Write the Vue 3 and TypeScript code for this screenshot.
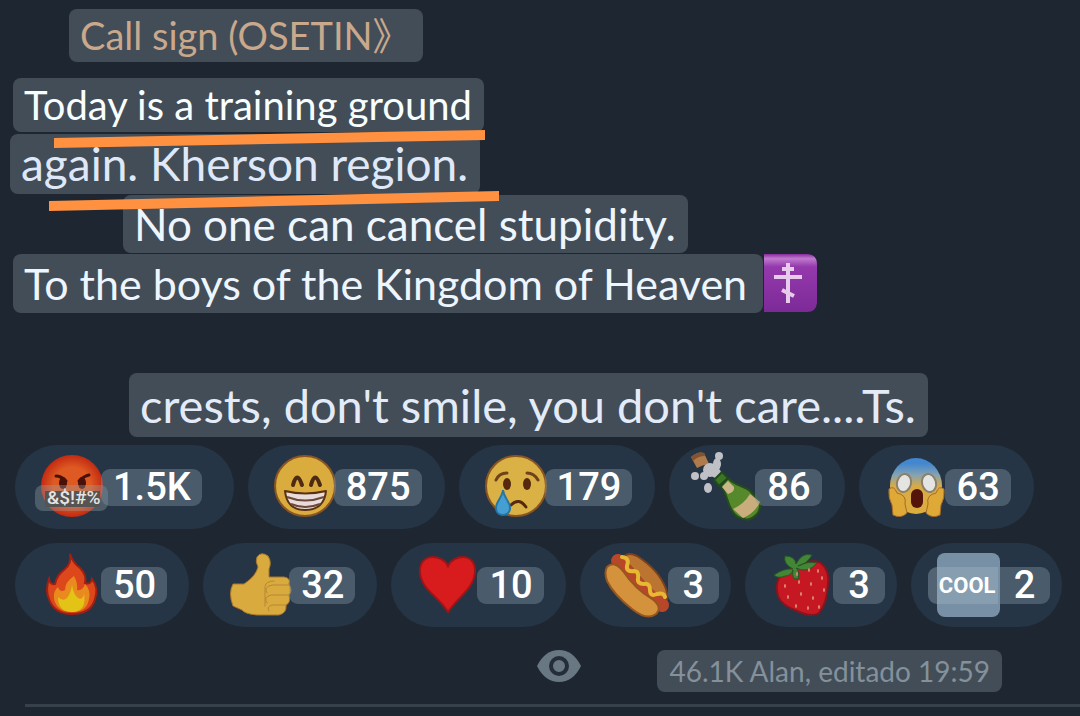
<script setup lang="ts">
type Icon =
  | 'rage' | 'grin' | 'cry' | 'bottle' | 'scream'
  | 'fire' | 'thumb' | 'heart' | 'hotdog' | 'berry' | 'cool'

interface Reaction {
  icon: Icon
  count: string
  name: string
  tag?: string
}

const rows: Reaction[][] = [
  [
    { icon: 'rage', count: '1.5K', name: 'Rage', tag: '&$!#%' },
    { icon: 'grin', count: '875', name: 'Grin' },
    { icon: 'cry', count: '179', name: 'Crying' },
    { icon: 'bottle', count: '86', name: 'Champagne' },
    { icon: 'scream', count: '63', name: 'Scream' },
  ],
  [
    { icon: 'fire', count: '50', name: 'Fire' },
    { icon: 'thumb', count: '32', name: 'Thumbs up' },
    { icon: 'heart', count: '10', name: 'Heart' },
    { icon: 'hotdog', count: '3', name: 'Hot dog' },
    { icon: 'berry', count: '3', name: 'Strawberry' },
    { icon: 'cool', count: '2', name: 'Cool', tag: 'COOL' },
  ],
]

const seeds = [
  [26, 20], [38, 16], [14, 32], [28, 28], [40, 30], [51, 24], [30, 40],
  [42, 44], [53, 36], [17, 43], [25, 52], [37, 54], [48, 53], [47, 17],
]
</script>

<template>
  <main class="post">
    <p class="line title">Call sign (OSETIN》</p>
    <p class="line today">Today is a training ground</p>
    <p class="line again">again. Kherson region.</p>
    <p class="line noone">No one can cancel stupidity.</p>
    <div class="with-cross">
      <p class="line boys">To the boys of the Kingdom of Heaven</p>
      <svg class="cross" viewBox="0 0 53 58" aria-hidden="true">
        <defs>
          <linearGradient id="purple" x1="0" y1="0" x2="0" y2="1">
            <stop offset="0" stop-color="#8a2ba0" />
            <stop offset="0.08" stop-color="#c07ace" />
            <stop offset="0.22" stop-color="#9439ac" />
            <stop offset="1" stop-color="#7d2a98" />
          </linearGradient>
        </defs>
        <path d="M0 0H44Q53 1 53 10V49Q52 58 43 58H0Z" fill="url(#purple)" />
        <path d="M24 9V49M18 15H30M10 23H38M18 36L30 42" fill="none" stroke="#e6cbea" stroke-width="4" />
      </svg>
    </div>
    <p class="line crests">crests, don't smile, you don't care....Ts.</p>

    <section class="reactions">
      <div v-for="(row, i) in rows" :key="i" class="row">
        <button
          v-for="r in row"
          :key="r.icon"
          type="button"
          class="pill"
          :class="[r.icon, { solo: r.count.length === 1, wide: i === 0 }]"
          :aria-label="`${r.name} ${r.count}`"
        >
          <span class="emoji">
            <svg viewBox="0 0 62 62" aria-hidden="true">
              <g v-if="r.icon === 'rage'">
                <defs>
                  <radialGradient id="anger">
                    <stop offset="0.6" stop-color="#de5a22" />
                    <stop offset="1" stop-color="#c32a12" />
                  </radialGradient>
                </defs>
                <circle cx="31" cy="30" r="31" fill="url(#anger)" />
                <path d="M15 20Q20 20 25 25M48 19Q43 20 38 25" fill="none" stroke="#4a1109" stroke-width="3" stroke-linecap="round" />
                <ellipse cx="22" cy="27" rx="4" ry="6" fill="#4a1109" />
                <ellipse cx="41" cy="27" rx="4" ry="6" fill="#4a1109" />
                <rect x="4" y="35" width="55" height="16" fill="#332824" />
              </g>
              <g v-else-if="r.icon === 'grin'">
                <circle cx="31" cy="30" r="30" fill="#d9ac3d" stroke="#8a5522" stroke-width="2" />
                <path d="M19 29Q23 14 28 29M37 29Q41 14 46 29" fill="none" stroke="#4f2a12" stroke-width="4" stroke-linecap="round" />
                <path d="M11 35Q31 40 52 35Q50 54 31 54Q13 54 11 35Z" fill="#e8dddb" stroke="#5b3113" stroke-width="2" stroke-linejoin="round" />
                <path d="M13 41Q31 48 50 41M17 48Q31 54 46 48" fill="none" stroke="#6b4a3b" stroke-width="2" />
              </g>
              <g v-else-if="r.icon === 'cry'">
                <circle cx="31" cy="30" r="30" fill="#d9b145" stroke="#8a5522" stroke-width="2" />
                <path d="M11 24Q14 17 22 17M42 17Q49 17 53 24" fill="none" stroke="#70421a" stroke-width="3" stroke-linecap="round" />
                <ellipse cx="22" cy="28" rx="4" ry="6" fill="#56290f" />
                <ellipse cx="42" cy="28" rx="4" ry="6" fill="#56290f" />
                <path d="M26 49Q34 41 41 51" fill="none" stroke="#56290f" stroke-width="3" stroke-linecap="round" />
                <path d="M18 34C19 43 26 46 25 53C24 61 12 61 11 53C10 47 17 42 18 34Z" fill="#469fd3" stroke="#2676a5" stroke-width="2" />
              </g>
              <g v-else-if="r.icon === 'bottle'">
                <path d="M-4 1Q3 -5 9 -3L14 8Q7 9 2 12Z" fill="#b07b4b" />
                <path d="M-4 1Q3 -5 9 -3L10 0Q3 0 -2 5Z" fill="#7f5334" />
                <g fill="#bfc1c7">
                  <circle cx="24" cy="0" r="4" />
                  <circle cx="0" cy="20" r="4" />
                  <ellipse cx="13" cy="32" rx="4" ry="5" />
                  <ellipse cx="22" cy="8" rx="4" ry="6" />
                  <circle cx="15" cy="14" r="7" />
                  <circle cx="9" cy="20" r="4" />
                  <circle cx="21" cy="17" r="5" />
                </g>
                <path d="M26 30L33 22C40 30 49 30 55 35L65 46Q66 53 62 58Q56 65 49 63Q42 62 38 56C31 46 33 39 26 30Z" fill="#55892c" stroke="#254d1a" stroke-width="2" />
                <path d="M19 24L27 16L33 22L24 30Z" fill="#3d7526" stroke="#1f4a1b" stroke-width="2" />
                <path d="M27 31L33 25L39 31Q40 36 33 38Z" fill="#cdb78a" />
                <path d="M38 53Q49 48 55 38L65 46Q60 57 48 62Z" fill="#c9ad7c" />
              </g>
              <g v-else-if="r.icon === 'scream'">
                <defs>
                  <linearGradient id="fear" x1="0" y1="0" x2="0" y2="1">
                    <stop offset="0.1" stop-color="#4287cf" />
                    <stop offset="0.3" stop-color="#84a2b2" />
                    <stop offset="0.5" stop-color="#d8aa48" />
                    <stop offset="1" stop-color="#dcae3c" />
                  </linearGradient>
                </defs>
                <ellipse cx="31" cy="30" rx="26" ry="28" fill="url(#fear)" />
                <path d="M4 33Q9 29 12 37Q22 39 20 48L22 57Q16 63 8 59L7 49Q3 42 4 33Z" fill="#dfa938" stroke="#a86a28" stroke-width="1" />
                <path d="M59 33Q54 29 51 37Q41 39 43 48L41 57Q47 63 55 59L56 49Q60 42 59 33Z" fill="#dfa938" stroke="#a86a28" stroke-width="1" />
                <ellipse cx="19" cy="27" rx="7" ry="9" transform="rotate(15 19 27)" fill="#e4e4e2" stroke="#8b806a" stroke-width="2" />
                <ellipse cx="44" cy="27" rx="7" ry="9" transform="rotate(-15 44 27)" fill="#e4e4e2" stroke="#8b806a" stroke-width="2" />
                <rect x="26" y="33" width="12" height="19" rx="6" fill="#551409" />
              </g>
              <g v-else-if="r.icon === 'fire'">
                <path d="M29 0Q32 9 39 14Q46 21 44 29Q50 31 51 25Q58 34 54 45Q50 60 31 60Q13 60 8 45Q4 36 8 25Q9 31 14 30Q16 21 23 16Q31 10 29 0Z" fill="#dc481b" stroke="#a41e12" stroke-width="2" />
                <path d="M33 22Q37 29 36 36Q42 37 44 30Q50 36 48 45Q46 58 31 58Q16 58 13 45Q12 37 17 33Q19 39 24 36Q24 28 33 22Z" fill="#e88a1d" />
                <path d="M31 31Q33 43 39 45Q43 44 43 39Q46 58 31 58Q17 58 17 43Q22 48 26 44Q30 39 31 31Z" fill="#e2c316" />
              </g>
              <g v-else-if="r.icon === 'thumb'">
                <path d="M28 3Q32 -3 39 2Q43 8 40 15L40 23H55Q62 24 60 30Q64 37 60 41Q62 49 57 51Q58 59 50 61H28Q16 60 13 56L4 52Q-1 39 4 30H15Q27 22 29 13Q26 7 28 3Z" fill="#d9aa3e" stroke="#a9762a" stroke-width="1" />
                <path d="M36 32Q37 27 45 27M60 31L43 31Q34 33 38 39M60 41H42Q34 43 38 49M57 51H43Q37 53 40 57M36 33V52" fill="none" stroke="#b98636" stroke-width="1" stroke-linecap="round" />
              </g>
              <g v-else-if="r.icon === 'heart'">
                <path d="M31 12C37 -1 60 -1 58 19C56 35 42 42 31 58C21 42 5 36 3 19C1 -1 25 -1 31 12Z" fill="#d81b1c" stroke="#9e1518" stroke-width="2" />
              </g>
              <g v-else-if="r.icon === 'hotdog'">
                <path d="M17 4Q21 -3 31 2Q53 16 60 35Q64 46 57 50Z" fill="#bb7530" stroke="#7b421d" stroke-width="2" />
                <path d="M12 7Q22 21 35 34Q47 46 56 51" fill="none" stroke="#b8472a" stroke-width="14" stroke-linecap="round" />
                <path d="M1 13Q8 6 17 17Q29 35 46 45Q57 53 50 60Q41 67 26 55Q8 41 1 27Q-2 18 1 13Z" fill="#d5923d" stroke="#96561e" stroke-width="2" />
                <path d="M16 3Q24 4 21 12Q20 18 28 17Q33 17 32 24Q31 30 38 30Q44 29 44 36Q44 43 51 40Q58 38 59 43" fill="none" stroke="#e7b832" stroke-width="4" stroke-linecap="round" />
              </g>
              <g v-else-if="r.icon === 'berry'">
                <path d="M8 24Q16 16 25 13Q41 4 50 9Q59 17 57 30Q56 50 48 59Q41 64 26 57Q10 51 7 42Q4 31 8 24Z" fill="#c51822" stroke="#86151d" stroke-width="2" />
                <path d="M22 15Q13 14 3 21Q7 25 14 22Q20 22 22 16Q20 26 27 25Q29 17 25 14Q37 20 46 9Q36 7 27 12Q36 10 41 1Q31 -2 25 10Q24 2 14 2Q12 10 22 15Z" fill="#438636" stroke="#255829" stroke-width="1" />
                <ellipse v-for="(s, n) in seeds" :key="n" :cx="s[0]" :cy="s[1]" rx="1" ry="2" fill="#dc8b75" />
              </g>
              <g v-else>
                <rect x="0" y="-1" width="63" height="64" rx="8" fill="#7790a5" />
              </g>
            </svg>
            <span v-if="r.tag" class="tag">{{ r.tag }}</span>
          </span>
          <span class="count">{{ r.count }}</span>
        </button>
      </div>
    </section>

    <footer class="meta">
      <svg class="eye" viewBox="0 0 44 32" aria-hidden="true">
        <path d="M0 16Q8 0 22 0T44 16Q36 32 22 32T0 16Z" fill="#697783" />
        <circle cx="22" cy="16" r="8" fill="#697783" stroke="#242e38" stroke-width="4" />
      </svg>
      <p class="line stamp">46.1K Alan, editado 19:59</p>
    </footer>

    <svg class="marks" width="500" height="212" viewBox="0 0 500 212" aria-hidden="true">
      <path d="M54 138L485 130V140L54 148ZM49 201L499 191V201L49 211Z" fill="#ff9140" />
    </svg>
  </main>
</template>

<style>
body {
  margin: 0;
  background: #1e2731;
}
</style>

<style scoped>
.post {
  position: relative;
  display: flex;
  flex-direction: column;
  align-items: flex-start;
  box-sizing: border-box;
  min-height: 100vh;
  padding-top: 9px;
  overflow: hidden;
  font-family: Lato, "Noto Sans CJK SC", sans-serif;
  background: #1e2731;
}

.line {
  margin: 0;
  padding: 0 12px 0 11px;
  border-radius: 8px;
  background: #434d58;
  color: #edf5ff;
  white-space: nowrap;
}

.title {
  margin-left: 69px;
  font-size: 38px;
  line-height: 53px;
  color: #c9a88c;
}

.today {
  margin: 16px 0 2px 13px;
  font-size: 40px;
  line-height: 54px;
  color: #f8ffff;
}

.again {
  margin-left: 10px;
  font-size: 46px;
  line-height: 60px;
  color: #dfe8f8;
}

.noone {
  margin: 1px 0 1px 123px;
  font-size: 44px;
  line-height: 58px;
}

.with-cross {
  display: flex;
  gap: 1px;
  margin-left: 13px;
}

.boys {
  padding-right: 16px;
  font-size: 43px;
  line-height: 59px;
}

.cross {
  width: 53px;
  height: 58px;
}

.crests {
  margin: 60px 0 8px 129px;
  font-size: 47px;
  line-height: 64px;
  color: #e3ebf8;
}

.reactions {
  display: flex;
  flex-direction: column;
  gap: 14px;
  padding-left: 15px;
}

.row {
  display: flex;
  gap: 14px;
}

.pill {
  display: flex;
  align-items: center;
  height: 84px;
  padding: 0 22px 0 26px;
  border: 0;
  border-radius: 42px;
  background: #263545;
  color: #fff;
  font-family: Roboto, sans-serif;
  cursor: pointer;
}

.wide {
  padding-right: 23px;
}

.rage {
  padding-right: 32px;
}

.solo {
  padding-right: 12px;
}

.emoji {
  position: relative;
  width: 60px;
  height: 62px;
}

.emoji svg {
  display: block;
  width: 62px;
  height: 62px;
  overflow: visible;
}

.count {
  position: relative;
  padding: 0 11px 0 12px;
  border-radius: 9px;
  background: rgba(125, 145, 160, 0.42);
  font-size: 38px;
  font-weight: 500;
  line-height: 37px;
}

.solo .count {
  margin-left: 2px;
  padding: 0 15px;
}

.tag {
  position: absolute;
  top: 29px;
  left: -6px;
  padding: 0 8px 0 12px;
  border-radius: 8px;
  background: rgba(150, 165, 170, 0.35);
  color: #e4e4e4;
  font-size: 19px;
  font-weight: 500;
  line-height: 26px;
}

.cool .tag {
  top: 13px;
  left: -9px;
  padding: 0 3px 0 11px;
  border-radius: 9px 0 0 9px;
  background: rgba(165, 185, 200, 0.35);
  color: #fff;
  font-size: 22px;
  font-weight: 700;
  line-height: 37px;
}

.cool .count {
  border-radius: 0 9px 9px 0;
}

.meta {
  display: flex;
  align-items: flex-start;
  align-self: stretch;
  justify-content: flex-end;
  gap: 76px;
  margin: 23px 0 0 25px;
  padding: 0 78px 12px 0;
  border-bottom: 3px solid #36414c;
}

.eye {
  width: 44px;
  height: 32px;
}

.stamp {
  padding: 0 12px;
  font-size: 28px;
  line-height: 42px;
  color: #84919b;
}

.marks {
  position: absolute;
  top: 0;
  left: 0;
}
</style>
